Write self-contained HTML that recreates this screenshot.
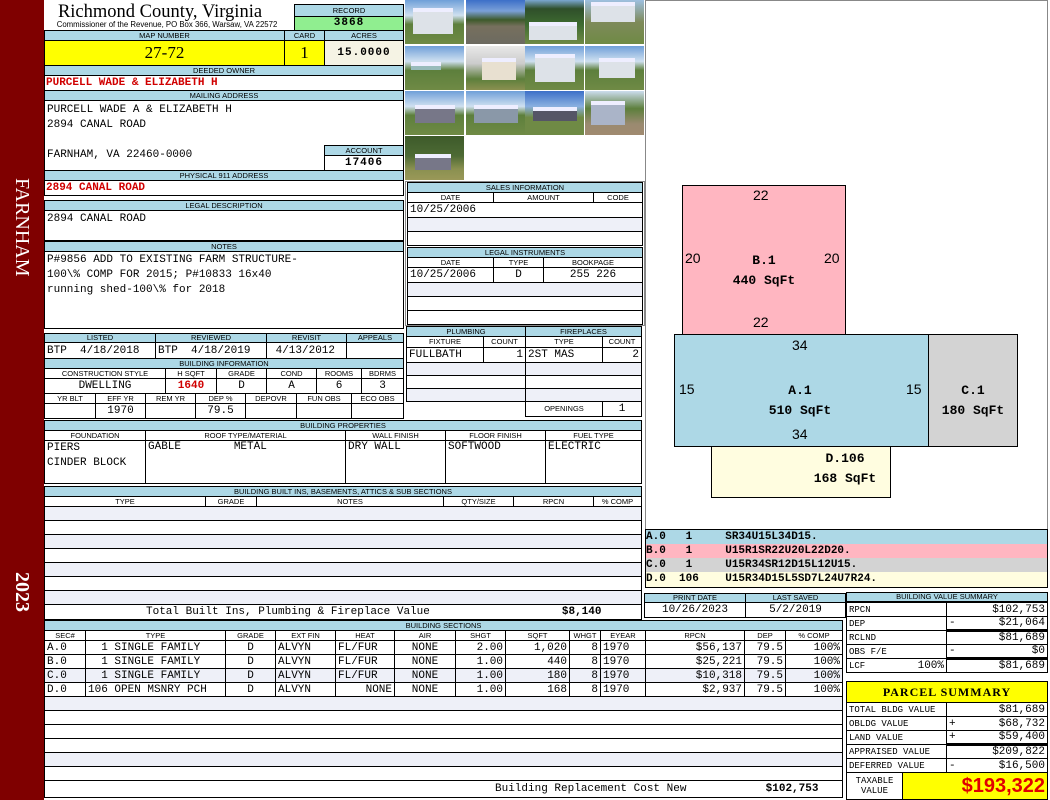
<!DOCTYPE html>
<html><head><meta charset="utf-8"><style>
*{box-sizing:border-box;margin:0;padding:0}
body{width:1050px;height:800px;position:relative;background:#fff;overflow:hidden;font-family:"Liberation Mono",monospace;font-size:11px;color:#000}
.a{position:absolute}
.bx{position:absolute;border:1px solid #000}
.h{position:absolute;background:#add8e6;border:1px solid #000;font-family:"Liberation Sans",sans-serif;font-size:7.5px;text-align:center;line-height:9px;text-transform:uppercase;letter-spacing:0}
.m{font-family:"Liberation Mono",monospace;font-size:11px;white-space:pre}
.red{color:#d00000;font-weight:bold}
table{border-collapse:collapse;table-layout:fixed;position:absolute}
td{border:1px solid #000;padding:0 2px;white-space:pre;overflow:hidden;font-family:"Liberation Mono",monospace;font-size:11px;line-height:12px}
td.h2{background:#fff;font-family:"Liberation Sans",sans-serif;font-size:7.5px;text-align:center;line-height:8px}
.st{background:#eef0f8}
.r{text-align:right}.c{text-align:center}
.ph{position:absolute;width:59px;height:44px;background:linear-gradient(#6f9fd8 0,#cfe0f0 35%,#5d7f3c 55%,#6f8a45 100%)}
.ph i{position:absolute;background:#dde2e8;border-top:4px solid #eef}
</style></head><body>
<div class="a" style="left:0;top:0;width:44px;height:800px;background:#7f0000"></div>
<div class="a" style="left:22px;top:178px;width:0;height:0"><div style="position:absolute;left:0;top:0;transform-origin:0 0;transform:rotate(90deg) translate(0,-11px);color:#fff;font-family:'Liberation Serif',serif;font-size:20px;line-height:22px;white-space:nowrap">FARNHAM</div></div>
<div class="a" style="left:22px;top:572px;width:0;height:0"><div style="position:absolute;left:0;top:0;transform-origin:0 0;transform:rotate(90deg) translate(0,-11px);color:#fff;font-family:'Liberation Serif',serif;font-size:20px;line-height:22px;font-weight:bold;white-space:nowrap">2023</div></div>

<div class="a" style="left:57px;top:2px;width:206px;text-align:center;font-family:'Liberation Serif',serif;font-size:18.5px;line-height:20px;white-space:nowrap">Richmond County, Virginia</div>
<div class="a" style="left:52px;top:20px;width:230px;text-align:center;font-family:'Liberation Sans',sans-serif;font-size:7.8px;line-height:9px;white-space:nowrap">Commissioner of the Revenue, PO Box 366, Warsaw, VA 22572</div>
<div class="h" style="left:294px;top:4px;width:110px;height:13px;line-height:11px">Record</div>
<div class="a" style="left:294px;top:16px;width:110px;height:15px;background:#90ee90;border:1px solid #000;text-align:center;font-weight:bold;font-size:11px;line-height:13px;letter-spacing:1px">3868</div>
<div class="h" style="left:44px;top:30px;width:241px;height:11px">Map Number</div>
<div class="h" style="left:284px;top:30px;width:41px;height:11px">Card</div>
<div class="h" style="left:324px;top:30px;width:80px;height:11px">Acres</div>
<div class="a" style="left:44px;top:40px;width:241px;height:26px;background:#ff0;border:1px solid #000;text-align:center;font-family:'Liberation Serif',serif;font-size:17px;line-height:24px">27-72</div>
<div class="a" style="left:284px;top:40px;width:41px;height:26px;background:#ff0;border:1px solid #000;text-align:center;font-family:'Liberation Serif',serif;font-size:17px;line-height:24px">1</div>
<div class="a" style="left:324px;top:40px;width:80px;height:26px;background:#f5f3e4;border:1px solid #000;text-align:center;font-weight:bold;font-size:11px;line-height:24px;letter-spacing:1px">15.0000</div>
<div class="h" style="left:44px;top:65px;width:360px;height:11px">Deeded Owner</div>
<div class="bx" style="left:44px;top:75px;width:360px;height:16px"></div>
<div class="a m red" style="left:46px;top:77px">PURCELL WADE &amp; ELIZABETH H</div>
<div class="h" style="left:44px;top:90px;width:360px;height:11px">Mailing Address</div>
<div class="bx" style="left:44px;top:100px;width:360px;height:71px"></div>
<div class="a m" style="left:47px;top:103px;line-height:15px">PURCELL WADE A &amp; ELIZABETH H
2894 CANAL ROAD

FARNHAM, VA 22460-0000</div>
<div class="h" style="left:324px;top:145px;width:80px;height:11px">Account</div>
<div class="a" style="left:324px;top:155px;width:80px;height:16px;border:1px solid #000;text-align:center;font-weight:bold;line-height:15px;letter-spacing:1px">17406</div>
<div class="h" style="left:44px;top:170px;width:360px;height:11px">Physical 911 Address</div>
<div class="bx" style="left:44px;top:180px;width:360px;height:16px"></div>
<div class="a m red" style="left:46px;top:182px">2894 CANAL ROAD</div>
<div class="h" style="left:44px;top:200px;width:360px;height:11px">Legal Description</div>
<div class="bx" style="left:44px;top:210px;width:360px;height:31px"></div>
<div class="a m" style="left:47px;top:213px">2894 CANAL ROAD</div>
<div class="h" style="left:44px;top:241px;width:360px;height:11px">Notes</div>
<div class="bx" style="left:44px;top:251px;width:360px;height:78px"></div>
<div class="a m" style="left:47px;top:253px;line-height:15px">P#9856 ADD TO EXISTING FARM STRUCTURE-
100\% COMP FOR 2015; P#10833 16x40
running shed-100\% for 2018</div>

<div class="h" style="left:44px;top:333px;width:112px;height:10px;line-height:8px">Listed</div>
<div class="h" style="left:155px;top:333px;width:112px;height:10px;line-height:8px">Reviewed</div>
<div class="h" style="left:266px;top:333px;width:81px;height:10px;line-height:8px">Revisit</div>
<div class="h" style="left:346px;top:333px;width:58px;height:10px;line-height:8px">Appeals</div>
<table style="left:44px;top:342px;width:360px"><tr style="height:16px"><td style="width:111px">BTP  4/18/2018</td><td style="width:111px">BTP  4/18/2019</td><td style="width:80px"> 4/13/2012</td><td></td></tr></table>
<div class="h" style="left:44px;top:358px;width:360px;height:11px">Building Information</div>
<table style="left:44px;top:368px;width:360px">
<tr style="height:10px"><td class="h2" style="width:121px">CONSTRUCTION STYLE</td><td class="h2" style="width:51px">H SQFT</td><td class="h2" style="width:50px">GRADE</td><td class="h2" style="width:50px">COND</td><td class="h2" style="width:45px">ROOMS</td><td class="h2">BDRMS</td></tr>
<tr style="height:15px"><td class="c">DWELLING</td><td class="c red">1640</td><td class="c">D</td><td class="c">A</td><td class="c">6</td><td class="c">3</td></tr></table>
<table style="left:44px;top:393px;width:360px">
<tr style="height:10px"><td class="h2" style="width:51px">YR BLT</td><td class="h2" style="width:50px">EFF YR</td><td class="h2" style="width:50px">REM YR</td><td class="h2" style="width:50px">DEP %</td><td class="h2" style="width:51px">DEPOVR</td><td class="h2" style="width:55px">FUN OBS</td><td class="h2">ECO OBS</td></tr>
<tr style="height:15px"><td></td><td class="c">1970</td><td></td><td class="c">79.5</td><td></td><td></td><td></td></tr></table>

<div class="ph" style="left:405px;top:0"><i style="left:8px;top:8px;width:40px;height:26px"></i></div>
<div class="ph" style="left:466px;top:0;background:linear-gradient(#3c6fc8 0,#7aa0d8 25%,#3d5a2a 45%,#77705e 60%,#6c6a60 100%)"></div>
<div class="ph" style="left:525px;top:0;background:linear-gradient(#7ba7d0 0,#2f4f2a 20%,#3d6a30 55%,#6f8a45 100%)"><i style="left:4px;top:22px;width:48px;height:18px"></i></div>
<div class="ph" style="left:585px;top:0;background:linear-gradient(#9ec0e0 0,#7e8a5a 50%,#6f8a45 100%)"><i style="left:6px;top:2px;width:44px;height:20px"></i></div>
<div class="ph" style="left:405px;top:46px"><i style="left:6px;top:16px;width:30px;height:8px;background:#9bb"></i></div>
<div class="ph" style="left:466px;top:46px;background:linear-gradient(#e8e8e8 0,#ccc 40%,#5d7f3c 75%,#8a9050 100%)"><i style="left:16px;top:12px;width:34px;height:22px;background:#e8e0d0"></i></div>
<div class="ph" style="left:525px;top:46px"><i style="left:10px;top:8px;width:40px;height:28px"></i></div>
<div class="ph" style="left:585px;top:46px"><i style="left:14px;top:12px;width:36px;height:20px"></i></div>
<div class="ph" style="left:405px;top:91px"><i style="left:10px;top:14px;width:40px;height:18px;background:#778"></i></div>
<div class="ph" style="left:466px;top:91px"><i style="left:8px;top:14px;width:44px;height:18px;background:#8a98a8"></i></div>
<div class="ph" style="left:525px;top:91px;background:linear-gradient(#3c6fc8 0,#8ab0e0 35%,#6f8a45 60%,#6f8a45 100%)"><i style="left:8px;top:16px;width:44px;height:14px;background:#556"></i></div>
<div class="ph" style="left:585px;top:91px;background:linear-gradient(#cde 0,#5d7f3c 40%,#9a8a70 75%,#a08a70 100%)"><i style="left:6px;top:10px;width:34px;height:24px;background:#aab4c8"></i></div>
<div class="ph" style="left:405px;top:136px;background:linear-gradient(#3d5a2a 0,#4d6a34 45%,#8a9050 75%,#9a9858 100%)"><i style="left:10px;top:18px;width:36px;height:16px;background:#778"></i></div>

<div class="bx" style="left:405px;top:181px;width:240px;height:145px;border-color:#888"></div>
<div class="h" style="left:407px;top:182px;width:236px;height:11px">Sales Information</div>
<table style="left:407px;top:192px;width:236px">
<tr style="height:10px"><td class="h2" style="width:86px">DATE</td><td class="h2" style="width:100px">AMOUNT</td><td class="h2">CODE</td></tr>
<tr style="height:15px"><td colspan="3">10/25/2006</td></tr>
<tr style="height:14px" class="st"><td colspan="3"></td></tr>
<tr style="height:14px"><td colspan="3"></td></tr></table>
<div class="h" style="left:407px;top:247px;width:236px;height:11px">Legal Instruments</div>
<table style="left:407px;top:257px;width:236px">
<tr style="height:10px"><td class="h2" style="width:86px">DATE</td><td class="h2" style="width:50px">TYPE</td><td class="h2">BOOKPAGE</td></tr>
<tr style="height:15px"><td>10/25/2006</td><td class="c">D</td><td class="c">255 226</td></tr>
<tr style="height:14px" class="st"><td colspan="3"></td></tr>
<tr style="height:14px"><td colspan="3"></td></tr>
<tr style="height:14px"><td colspan="3"></td></tr></table>

<div class="h" style="left:406px;top:326px;width:120px;height:11px">Plumbing</div>
<div class="h" style="left:525px;top:326px;width:117px;height:11px">Fireplaces</div>
<table style="left:406px;top:336px;width:236px">
<tr style="height:11px"><td class="h2" style="width:77px">FIXTURE</td><td class="h2" style="width:42px">COUNT</td><td class="h2" style="width:77px">TYPE</td><td class="h2">COUNT</td></tr>
<tr style="height:15px"><td>FULLBATH</td><td class="r">1</td><td>2ST MAS</td><td class="r">2</td></tr>
<tr style="height:13px" class="st"><td colspan="2"></td><td colspan="2"></td></tr>
<tr style="height:13px"><td colspan="2"></td><td colspan="2"></td></tr>
<tr style="height:13px" class="st"><td colspan="2"></td><td colspan="2"></td></tr></table>
<table style="left:525px;top:401px;width:117px">
<tr style="height:15px"><td class="h2" style="width:77px">OPENINGS</td><td class="c">1</td></tr></table>

<div class="h" style="left:44px;top:420px;width:598px;height:11px">Building Properties</div>
<table style="left:44px;top:430px;width:598px">
<tr style="height:10px"><td class="h2" style="width:101px">FOUNDATION</td><td class="h2" style="width:200px">ROOF TYPE/MATERIAL</td><td class="h2" style="width:100px">WALL FINISH</td><td class="h2" style="width:100px">FLOOR FINISH</td><td class="h2">FUEL TYPE</td></tr>
<tr style="height:43px;vertical-align:top"><td style="line-height:15px">PIERS
CINDER BLOCK</td><td>GABLE        METAL</td><td>DRY WALL</td><td>SOFTWOOD</td><td>ELECTRIC</td></tr></table>

<div class="h" style="left:44px;top:486px;width:598px;height:11px">Building Built Ins, Basements, Attics &amp; Sub Sections</div>
<table style="left:44px;top:496px;width:598px">
<tr style="height:10px"><td class="h2" style="width:161px">TYPE</td><td class="h2" style="width:51px">GRADE</td><td class="h2" style="width:187px">NOTES</td><td class="h2" style="width:70px">QTY/SIZE</td><td class="h2" style="width:80px">RPCN</td><td class="h2">% COMP</td></tr>
<tr style="height:14px" class="st"><td colspan="6"></td></tr>
<tr style="height:14px"><td colspan="6"></td></tr>
<tr style="height:14px" class="st"><td colspan="6"></td></tr>
<tr style="height:14px"><td colspan="6"></td></tr>
<tr style="height:14px" class="st"><td colspan="6"></td></tr>
<tr style="height:14px"><td colspan="6"></td></tr>
<tr style="height:14px" class="st"><td colspan="6"></td></tr>
<tr style="height:15px"><td colspan="6" style="padding-left:101px">Total Built Ins, Plumbing &amp; Fireplace Value                    <b>$8,140</b></td></tr></table>

<div class="h" style="left:644px;top:593px;width:102px;height:10px;line-height:8px">Print Date</div>
<div class="h" style="left:745px;top:593px;width:101px;height:10px;line-height:8px">Last Saved</div>
<table style="left:644px;top:602px;width:202px"><tr style="height:15px"><td class="c" style="width:101px">10/26/2023</td><td class="c">5/2/2019</td></tr></table>

<div class="h" style="left:44px;top:620px;width:799px;height:11px">Building Sections</div>
<table style="left:44px;top:630px;width:799px">
<tr style="height:10px"><td class="h2" style="width:41px">SEC#</td><td class="h2" style="width:140px">TYPE</td><td class="h2" style="width:50px">GRADE</td><td class="h2" style="width:60px">EXT FIN</td><td class="h2" style="width:59px">HEAT</td><td class="h2" style="width:61px">AIR</td><td class="h2" style="width:50px">SHGT</td><td class="h2" style="width:64px">SQFT</td><td class="h2" style="width:31px">WHGT</td><td class="h2" style="width:45px">EYEAR</td><td class="h2" style="width:99px">RPCN</td><td class="h2" style="width:41px">DEP</td><td class="h2">% COMP</td></tr>
<tr style="height:14px"><td>A.0</td><td>  1 SINGLE FAMILY</td><td class="c">D</td><td>ALVYN</td><td>FL/FUR</td><td class="c">NONE</td><td class="r">2.00</td><td class="r">1,020</td><td class="r">8</td><td>1970</td><td class="r">$56,137</td><td class="r">79.5</td><td class="r">100%</td></tr>
<tr style="height:14px"><td>B.0</td><td>  1 SINGLE FAMILY</td><td class="c">D</td><td>ALVYN</td><td>FL/FUR</td><td class="c">NONE</td><td class="r">1.00</td><td class="r">440</td><td class="r">8</td><td>1970</td><td class="r">$25,221</td><td class="r">79.5</td><td class="r">100%</td></tr>
<tr style="height:14px" class="st"><td>C.0</td><td>  1 SINGLE FAMILY</td><td class="c">D</td><td>ALVYN</td><td>FL/FUR</td><td class="c">NONE</td><td class="r">1.00</td><td class="r">180</td><td class="r">8</td><td>1970</td><td class="r">$10,318</td><td class="r">79.5</td><td class="r">100%</td></tr>
<tr style="height:14px"><td>D.0</td><td>106 OPEN MSNRY PCH</td><td class="c">D</td><td>ALVYN</td><td class="r">NONE</td><td class="c">NONE</td><td class="r">1.00</td><td class="r">168</td><td class="r">8</td><td>1970</td><td class="r">$2,937</td><td class="r">79.5</td><td class="r">100%</td></tr>
<tr style="height:14px" class="st"><td colspan="13"></td></tr>
<tr style="height:14px"><td colspan="13"></td></tr>
<tr style="height:14px"><td colspan="13"></td></tr>
<tr style="height:14px"><td colspan="13"></td></tr>
<tr style="height:14px" class="st"><td colspan="13"></td></tr>
<tr style="height:14px"><td colspan="13"></td></tr>
<tr style="height:17px"><td colspan="13" style="padding-left:450px">Building Replacement Cost New            <b>$102,753</b></td></tr></table>

<div class="bx" style="left:645px;top:0;width:403px;height:530px;border-color:#888"></div>
<div class="bx" style="left:682px;top:185px;width:164px;height:150px;background:#ffb6c1"></div>
<div class="bx" style="left:674px;top:334px;width:255px;height:113px;background:#add8e6"></div>
<div class="bx" style="left:928px;top:334px;width:90px;height:113px;background:#d3d3d3"></div>
<div class="bx" style="left:711px;top:446px;width:180px;height:52px;background:#fffde0"></div>
<div class="a" style="font-family:'Liberation Sans',sans-serif;font-size:14px;left:753px;top:187px">22</div>
<div class="a" style="font-family:'Liberation Sans',sans-serif;font-size:14px;left:685px;top:250px">20</div>
<div class="a" style="font-family:'Liberation Sans',sans-serif;font-size:14px;left:824px;top:250px">20</div>
<div class="a" style="font-family:'Liberation Sans',sans-serif;font-size:14px;left:753px;top:314px">22</div>
<div class="a" style="font-family:'Liberation Sans',sans-serif;font-size:14px;left:792px;top:337px">34</div>
<div class="a" style="font-family:'Liberation Sans',sans-serif;font-size:14px;left:679px;top:381px">15</div>
<div class="a" style="font-family:'Liberation Sans',sans-serif;font-size:14px;left:906px;top:381px">15</div>
<div class="a" style="font-family:'Liberation Sans',sans-serif;font-size:14px;left:792px;top:426px">34</div>
<div class="a" style="font-weight:bold;font-size:13px;left:682px;width:164px;text-align:center;top:251px;line-height:20px">B.1<br>440 SqFt</div>
<div class="a" style="font-weight:bold;font-size:13px;left:720px;width:160px;text-align:center;top:381px;line-height:20px">A.1<br>510 SqFt</div>
<div class="a" style="font-weight:bold;font-size:13px;left:928px;width:90px;text-align:center;top:381px;line-height:20px">C.1<br>180 SqFt</div>
<div class="a" style="font-weight:bold;font-size:13px;left:790px;width:110px;text-align:center;top:449px;line-height:20px">D.106<br>168 SqFt</div>

<div class="a" style="left:645px;top:529px;width:403px;height:59px;border:1px solid #000"></div>
<div class="a m" style="left:646px;top:530px;width:401px;height:14px;background:#add8e6;font-weight:bold;line-height:14px">A.0   1     SR34U15L34D15.</div>
<div class="a m" style="left:646px;top:544px;width:401px;height:14px;background:#ffb6c1;font-weight:bold;line-height:14px">B.0   1     U15R1SR22U20L22D20.</div>
<div class="a m" style="left:646px;top:558px;width:401px;height:14px;background:#d3d3d3;font-weight:bold;line-height:14px">C.0   1     U15R34SR12D15L12U15.</div>
<div class="a m" style="left:646px;top:572px;width:401px;height:15px;background:#fffde0;font-weight:bold;line-height:14px">D.0  106    U15R34D15L5SD7L24U7R24.</div>

<div class="h" style="left:846px;top:592px;width:202px;height:10px;line-height:8px">Building Value Summary</div>
<table style="left:846px;top:602px;width:202px">
<tr style="height:14px"><td style="width:100px;font-size:9px">RPCN</td><td class="r">$102,753</td></tr>
<tr style="height:14px"><td style="font-size:9px">DEP</td><td class="r" style="border-bottom:3px solid #000"><span style="float:left">-</span>$21,064</td></tr>
<tr style="height:14px"><td style="font-size:9px">RCLND</td><td class="r">$81,689</td></tr>
<tr style="height:14px"><td style="font-size:9px">OBS F/E</td><td class="r" style="border-bottom:3px solid #000"><span style="float:left">-</span>$0</td></tr>
<tr style="height:14px"><td style="font-size:9px">LCF<span style="float:right;font-size:11px">100%</span></td><td class="r">$81,689</td></tr></table>

<div class="a" style="left:846px;top:681px;width:202px;height:22px;background:#ff0;border:1px solid #000;text-align:center;font-family:'Liberation Serif',serif;font-weight:bold;font-size:12px;line-height:20px;letter-spacing:1px">PARCEL SUMMARY</div>
<table style="left:846px;top:702px;width:202px">
<tr style="height:14px"><td style="width:100px;font-size:9px">TOTAL BLDG VALUE</td><td class="r">$81,689</td></tr>
<tr style="height:14px"><td style="font-size:9px">OBLDG VALUE</td><td class="r"><span style="float:left">+</span>$68,732</td></tr>
<tr style="height:14px"><td style="font-size:9px">LAND VALUE</td><td class="r" style="border-bottom:3px solid #000"><span style="float:left">+</span>$59,400</td></tr>
<tr style="height:14px"><td style="font-size:9px">APPRAISED VALUE</td><td class="r">$209,822</td></tr>
<tr style="height:14px"><td style="font-size:9px">DEFERRED VALUE</td><td class="r"><span style="float:left">-</span>$16,500</td></tr></table>
<div class="a" style="left:846px;top:772px;width:57px;height:28px;border:1px solid #000;font-size:9px;line-height:10px;text-align:center;padding-top:3px">TAXABLE<br>VALUE</div>
<div class="a" style="left:902px;top:772px;width:146px;height:28px;background:#ff0;border:1px solid #000;text-align:right;color:#e00000;font-family:'Liberation Sans',sans-serif;font-weight:bold;font-size:20px;line-height:26px;padding-right:2px">$193,322</div>
</body></html>
